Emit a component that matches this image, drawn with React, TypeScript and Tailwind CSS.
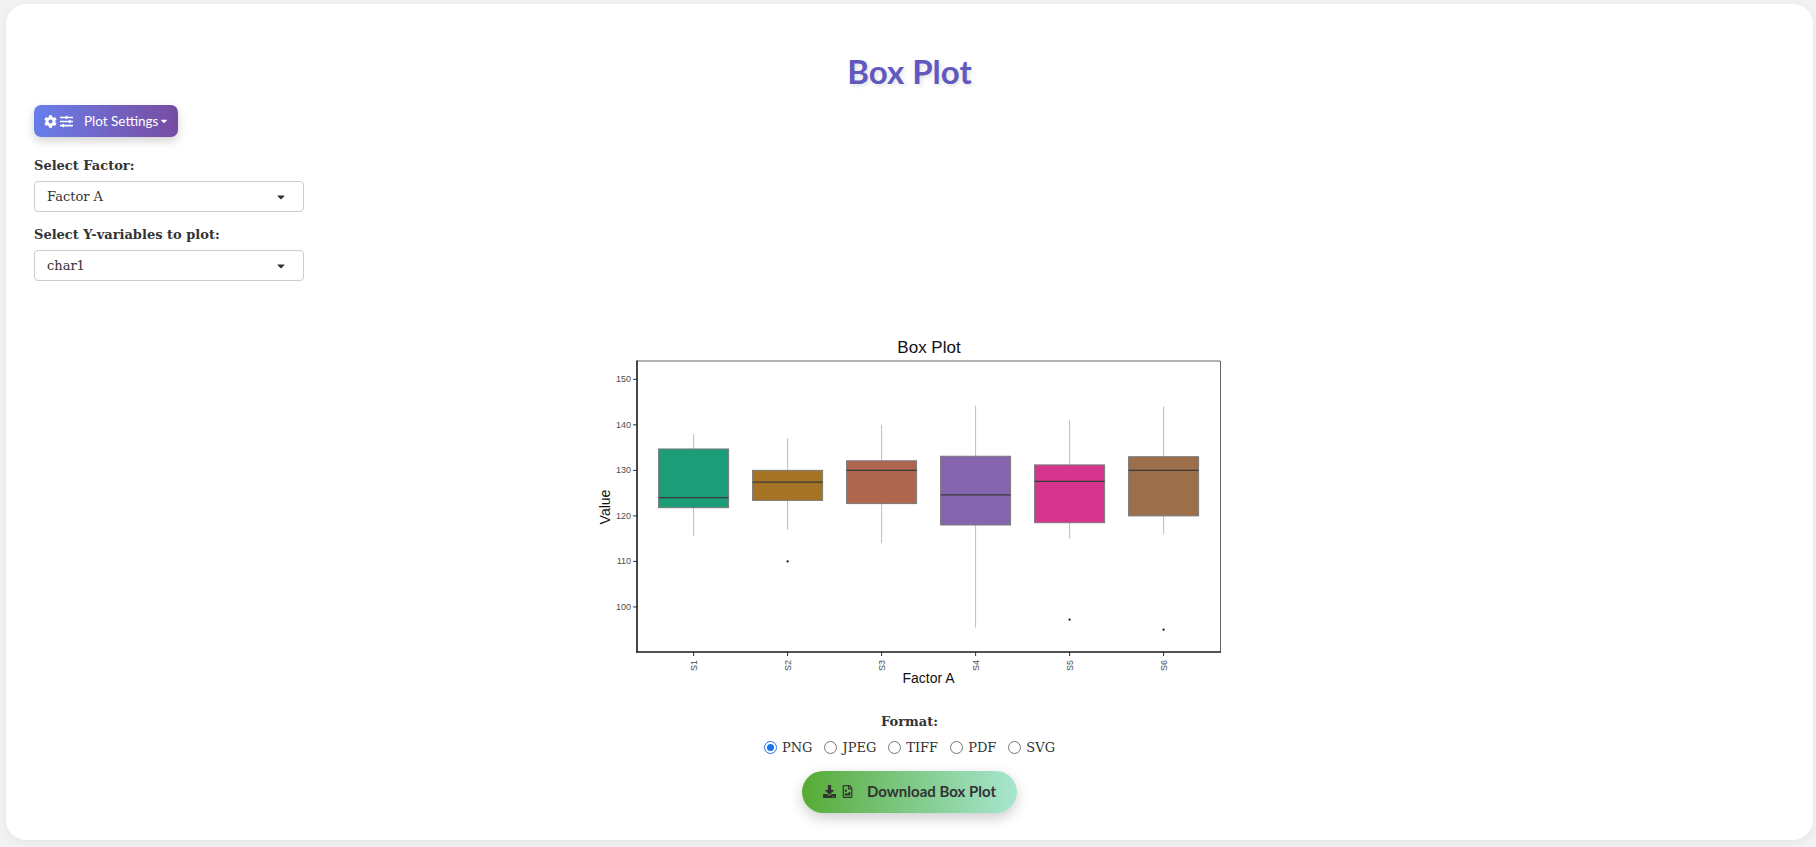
import { FaCog, FaSlidersH, FaDownload, FaRegFileImage, FaCaretDown } from "react-icons/fa";

const serif = { fontFamily: '"DejaVu Serif", Georgia, serif' };
const sans = { fontFamily: 'Lato, "Open Sans", sans-serif' };

type Box = { name: string; color: string; hi: number; q3: number; med: number; q1: number; lo: number; out: number[] };

const boxes: Box[] = [
  { name: "S1", color: "#1B9E77", hi: 138, q3: 134.7, med: 124, q1: 121.8, lo: 115.6, out: [] },
  { name: "S2", color: "#A47323", hi: 137, q3: 130, med: 127.4, q1: 123.4, lo: 117, out: [110] },
  { name: "S3", color: "#AE664E", hi: 140, q3: 132.1, med: 130, q1: 122.7, lo: 114, out: [] },
  { name: "S4", color: "#8566AE", hi: 144.2, q3: 133.1, med: 124.6, q1: 118, lo: 95.5, out: [] },
  { name: "S5", color: "#D6358D", hi: 141, q3: 131.2, med: 127.6, q1: 118.5, lo: 115, out: [97.2] },
  { name: "S6", color: "#9C6F4A", hi: 144, q3: 133, med: 130, q1: 120, lo: 116, out: [95] },
];

const yOf = (v: number) => 59.3 + (150 - v) * 4.553;
const xOf = (i: number) => 103.6 + i * 94;

function BoxPlotChart() {
  const font = '"Liberation Sans", Arial, sans-serif';
  return (
    <svg width={640} height={380} viewBox="0 0 640 380" style={{ fontFamily: font }}>
      <text x={339} y={33} textAnchor="middle" fontSize={17} fill="#111">
        Box Plot
      </text>
      {/* panel border */}
      <line x1={47} y1={41} x2={630.5} y2={41} stroke="#666" strokeWidth={1} />
      <line x1={630.5} y1={41} x2={630.5} y2={332} stroke="#666" strokeWidth={1} />
      {/* y ticks */}
      {[150, 140, 130, 120, 110, 100].map((v) => (
        <g key={v}>
          <line x1={43} x2={47} y1={yOf(v)} y2={yOf(v)} stroke="#333" strokeWidth={1} />
          <text x={41} y={yOf(v) + 3} textAnchor="end" fontSize={9} fill="#4d4d4d">
            {v}
          </text>
        </g>
      ))}
      {boxes.map((b, i) => {
        const cx = xOf(i);
        return (
          <g key={b.name}>
            <line x1={cx} x2={cx} y1={yOf(b.hi)} y2={yOf(b.q3)} stroke="#bdbdbd" strokeWidth={1} />
            <line x1={cx} x2={cx} y1={yOf(b.q1)} y2={yOf(b.lo)} stroke="#bdbdbd" strokeWidth={1} />
            <rect x={cx - 35} y={yOf(b.q3)} width={70} height={yOf(b.q1) - yOf(b.q3)} fill={b.color} stroke="#7a7a7a" strokeWidth={1} />
            <line x1={cx - 35} x2={cx + 35} y1={yOf(b.med)} y2={yOf(b.med)} stroke="#3a3a3a" strokeWidth={1.2} />
            {b.out.map((o) => (
              <circle key={o} cx={cx} cy={yOf(o)} r={1.1} fill="#111" />
            ))}
            <line x1={cx} x2={cx} y1={332} y2={336} stroke="#333" strokeWidth={1} />
            <text x={cx + 3} y={340} textAnchor="end" fontSize={9} fill="#4d4d4d" transform={`rotate(-90 ${cx + 3} 340)`}>
              {b.name}
            </text>
          </g>
        );
      })}
      {/* axis lines */}
      <line x1={47} y1={40.5} x2={47} y2={332.5} stroke="#1a1a1a" strokeWidth={1.6} />
      <line x1={46.2} y1={332} x2={631} y2={332} stroke="#1a1a1a" strokeWidth={1.6} />
      <text x={20} y={187} textAnchor="middle" fontSize={14} fill="#111" transform="rotate(-90 20 187)">
        Value
      </text>
      <text x={338.5} y={363} textAnchor="middle" fontSize={14} fill="#111">
        Factor A
      </text>
    </svg>
  );
}

function SelectBox({ value }: { value: string }) {
  return (
    <div className="flex h-[31px] w-[270px] items-center justify-between rounded-[4px] border border-[#cccccc] bg-white pl-3 pr-4 text-[13px] text-[#333]" style={serif}>
      <span>{value}</span>
      <FaCaretDown className="text-[12px] text-[#333]" />
    </div>
  );
}

function Radio({ label, checked }: { label: string; checked?: boolean }) {
  return (
    <div className="flex items-center gap-[5px]">
      {checked ? (
        <span className="flex h-[13px] w-[13px] items-center justify-center rounded-full border-[1.5px] border-[#1a73e8] bg-white">
          <span className="h-[7px] w-[7px] rounded-full bg-[#1a73e8]" />
        </span>
      ) : (
        <span className="h-[13px] w-[13px] rounded-full border border-[#767676] bg-white" />
      )}
      <span className="text-[13px] text-[#333]" style={serif}>
        {label}
      </span>
    </div>
  );
}

export default function App() {
  return (
    <div className="min-h-screen bg-[#f2f2f2] pb-[7px] pl-[6px] pr-[3px] pt-[4px]">
      <div className="flex h-[836px] flex-col rounded-[20px] bg-white px-[28px] shadow-[0_2px_10px_rgba(0,0,0,0.06)]">
        <h1
          className="mt-[47px] text-center text-[33px] font-bold leading-[40px] text-[#6159bf] [text-shadow:2px_2px_4px_rgba(0,0,0,0.12)]"
          style={sans}
        >
          Box Plot
        </h1>
        <div className="mt-[14px]">
          <button
            className="flex h-[32px] items-center rounded-[7px] bg-gradient-to-r from-[#667eea] to-[#764ba2] pl-[10px] pr-[9px] text-[13.5px] text-white shadow-[0_4px_10px_rgba(0,0,0,0.18)]"
            style={sans}
          >
            <FaCog className="text-[13px]" />
            <FaSlidersH className="ml-[3px] text-[13px]" />
            <span className="ml-[11px]">Plot Settings</span>
            <FaCaretDown className="ml-[1px] text-[10px]" />
          </button>
        </div>
        <div className="mt-[20px] flex flex-col">
          <label className="text-[13px] font-bold leading-[18px] text-[#333]" style={serif}>
            Select Factor:
          </label>
          <div className="mt-[6px]">
            <SelectBox value="Factor A" />
          </div>
          <label className="mt-[14px] text-[13px] font-bold leading-[18px] text-[#333]" style={serif}>
            Select Y-variables to plot:
          </label>
          <div className="mt-[6px]">
            <SelectBox value="char1" />
          </div>
        </div>
        <div className="mt-[39px] flex justify-center">
          <BoxPlotChart />
        </div>
        <div className="mt-[13px] flex flex-col items-center">
          <div className="text-[13px] font-bold leading-[18px] text-[#333]" style={serif}>
            Format:
          </div>
          <div className="mt-[7px] flex items-center gap-[12px]">
            <Radio label="PNG" checked />
            <Radio label="JPEG" />
            <Radio label="TIFF" />
            <Radio label="PDF" />
            <Radio label="SVG" />
          </div>
          <button
            className="mt-[13px] flex h-[42px] w-[215px] items-center justify-center rounded-full bg-gradient-to-r from-[#56ab2f] to-[#a8e6cf] text-[15px] font-bold text-[#333] shadow-[0_5px_14px_rgba(0,0,0,0.2)]"
            style={sans}
          >
            <FaDownload className="text-[13px]" />
            <FaRegFileImage className="ml-[5px] text-[13px]" />
            <span className="ml-[13px]">Download Box Plot</span>
          </button>
        </div>
      </div>
    </div>
  );
}
